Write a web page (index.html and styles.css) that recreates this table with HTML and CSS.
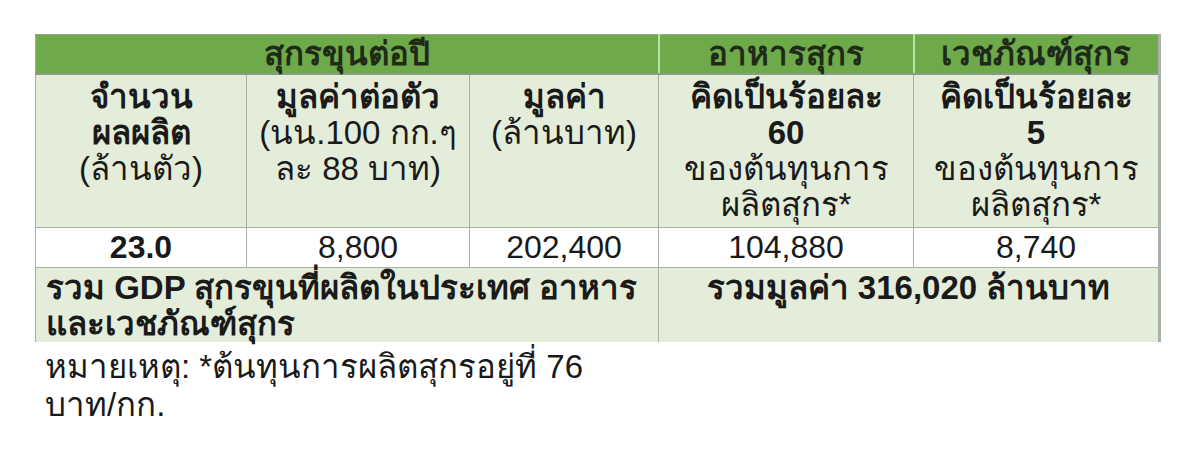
FILE: index.html
```html
<!DOCTYPE html>
<html lang="th">
<head>
<meta charset="utf-8">
<link rel="stylesheet" href="styles.css">
</head>
<body>
<div class="page">
  <table class="pig-table">
    <colgroup>
      <col class="c1"><col class="c2"><col class="c3"><col class="c4"><col class="c5">
    </colgroup>
    <tr class="row-head">
      <th colspan="3" class="h-main">สุกรขุนต่อปี</th>
      <th class="h-div">อาหารสุกร</th>
      <th class="h-div">เวชภัณฑ์สุกร</th>
    </tr>
    <tr class="row-sub">
      <td><b>จำนวน<br>ผลผลิต</b><br>(ล้านตัว)</td>
      <td><b>มูลค่าต่อตัว</b><br>(นน.100 กก.ๆ<br>ละ 88 บาท)</td>
      <td><b>มูลค่า</b><br>(ล้านบาท)</td>
      <td><b>คิดเป็นร้อยละ<br>60</b><br>ของต้นทุนการ<br>ผลิตสุกร*</td>
      <td><b>คิดเป็นร้อยละ<br>5</b><br>ของต้นทุนการ<br>ผลิตสุกร*</td>
    </tr>
    <tr class="row-data">
      <td><b>23.0</b></td>
      <td>8,800</td>
      <td>202,400</td>
      <td>104,880</td>
      <td>8,740</td>
    </tr>
    <tr class="row-total">
      <td colspan="3" class="total-label">รวม GDP สุกรขุนที่ผลิตในประเทศ อาหาร<br>และเวชภัณฑ์สุกร</td>
      <td colspan="2" class="total-value">รวมมูลค่า 316,020 ล้านบาท</td>
    </tr>
  </table>
  <p class="note">หมายเหตุ: *ต้นทุนการผลิตสุกรอยู่ที่ 76<br>บาท/กก.</p>
</div>
</body>
</html>
```

FILE: styles.css
```css
html, body {
  margin: 0;
  padding: 0;
  background: #ffffff;
}

body {
  font-family: "Liberation Sans", Arial, sans-serif;
  color: #1a1a1a;
}

.page {
  padding: 34px 0 0 35px;
}

.pig-table {
  border-collapse: collapse;
  table-layout: fixed;
  width: 1124px;
  font-size: 33px;
  line-height: 36px;
}

.c1 { width: 211px; }
.c2 { width: 223px; }
.c3 { width: 189px; }
.c4 { width: 255px; }
.c5 { width: 246px; }

.pig-table td,
.pig-table th {
  border: 1px solid #a7b0a5;
  padding: 0 4px;
  text-align: center;
  vertical-align: top;
  white-space: nowrap;
}

.row-head th {
  height: 38px;
  background: #6eaa4a;
  color: #1f2a18;
  font-weight: bold;
  vertical-align: middle;
  border-top: 1px solid #8fae80;
  border-bottom: 2px solid #8a9c86;
}

.row-head th.h-div {
  border-left: 2px solid #b8e39a;
}

.row-head th.h-main {
  border-left: 1px solid #9bb58e;
}

.row-sub td {
  height: 153px;
  background: #e3edd9;
  padding-top: 4px;
  box-sizing: border-box;
}

.row-data td {
  height: 39px;
  background: #ffffff;
  vertical-align: middle;
  font-size: 32px;
}

.row-total td {
  height: 75px;
  background: #e3edd9;
  font-weight: bold;
  padding-top: 2px;
  box-sizing: border-box;
  border-bottom: none;
}

.row-total .total-label {
  text-align: left;
  padding-left: 10px;
}

.pig-table td:last-child,
.pig-table th:last-child {
  border-right: 3px solid #a9b2a8;
}

.note {
  margin: 0;
  padding: 6px 0 0 10px;
  font-size: 33px;
  line-height: 38px;
  color: #1a1a1a;
}
```
